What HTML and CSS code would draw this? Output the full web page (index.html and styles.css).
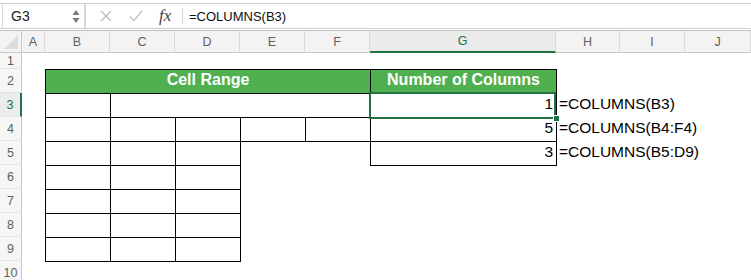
FILE: index.html
```html
<!DOCTYPE html>
<html lang="en">
  <head>
    <meta charset="UTF-8" />
    <title>COLUMNS function</title>
    <link rel="stylesheet" href="styles.css">
  </head>
  <body>
    <header class="formula-bar">
      <div class="name-box">
        <span class="cell-ref">G3</span>
        <svg class="spin" width="8" height="16" viewBox="0 0 8 16">
          <path d="M4 2 L7.5 7 H0.5 Z M4 15 L7.5 10 H0.5 Z" fill="#7a7a7a" />
        </svg>
      </div>
      <div class="formula-tools">
        <svg width="12" height="12" viewBox="0 0 12 12">
          <path d="M1 1 L11 11 M11 1 L1 11" stroke="#c4c4c4" stroke-width="1.6" fill="none" />
        </svg>
        <svg width="14" height="12" viewBox="0 0 14 12">
          <path d="M1 6.5 L5 10.5 L13 1" stroke="#c4c4c4" stroke-width="1.5" fill="none" />
        </svg>
        <span class="fx">fx</span>
      </div>
      <div class="formula-input">=COLUMNS(B3)</div>
    </header>

    <div class="sheet">
      <div class="corner"></div>
      <div class="col-head">A</div>
      <div class="col-head">B</div>
      <div class="col-head">C</div>
      <div class="col-head">D</div>
      <div class="col-head">E</div>
      <div class="col-head">F</div>
      <div class="col-head active">G</div>
      <div class="col-head">H</div>
      <div class="col-head">I</div>
      <div class="col-head">J</div>

      <div class="row-head row-1">1</div>
      <div class="row-head row-2">2</div>
      <div class="row-head row-3 active">3</div>
      <div class="row-head row-4">4</div>
      <div class="row-head row-5">5</div>
      <div class="row-head row-6">6</div>
      <div class="row-head row-7">7</div>
      <div class="row-head row-8">8</div>
      <div class="row-head row-9">9</div>
      <div class="row-head row-10">10</div>

      <!-- row 2: headers -->
      <div class="cell title span-bf row-2">Cell Range</div>
      <div class="cell title col-g row-2">Number of Columns</div>

      <!-- row 3 -->
      <div class="cell col-b row-3"></div>
      <div class="cell span-cf row-3"></div>
      <div class="cell num col-g row-3 selected">1</div>
      <div class="note col-h row-3">=COLUMNS(B3)</div>

      <!-- row 4 -->
      <div class="cell col-b row-4"></div>
      <div class="cell col-c row-4"></div>
      <div class="cell col-d row-4"></div>
      <div class="cell col-e row-4"></div>
      <div class="cell col-f row-4"></div>
      <div class="cell num col-g row-4">5</div>
      <div class="note col-h row-4">=COLUMNS(B4:F4)</div>

      <!-- row 5 -->
      <div class="cell col-b row-5"></div>
      <div class="cell col-c row-5"></div>
      <div class="cell col-d row-5"></div>
      <div class="cell num col-g row-5">3</div>
      <div class="note col-h row-5">=COLUMNS(B5:D9)</div>

      <!-- rows 6-9 -->
      <div class="cell col-b row-6"></div>
      <div class="cell col-c row-6"></div>
      <div class="cell col-d row-6"></div>
      <div class="cell col-b row-7"></div>
      <div class="cell col-c row-7"></div>
      <div class="cell col-d row-7"></div>
      <div class="cell col-b row-8"></div>
      <div class="cell col-c row-8"></div>
      <div class="cell col-d row-8"></div>
      <div class="cell col-b row-9"></div>
      <div class="cell col-c row-9"></div>
      <div class="cell col-d row-9"></div>
    </div>
  </body>
</html>
```

FILE: styles.css
```css
:root {
  --grid-line: #d9d9d9;
  --head-bg: #f3f3f3;
  --head-text: #5f5f5f;
  --select: #217346;
  --title-green: #50b050;
}

body {
  margin: 0;
  background: #fff;
  font-family: 'Liberation Sans', Arial, sans-serif;
  overflow: hidden;
}

/* formula bar */

.formula-bar {
  display: flex;
  height: 24px;
  margin-top: 3px;
  border-top: 1px solid #cfcfcf;
  border-bottom: 1px solid #cfcfcf;
}

.name-box {
  box-sizing: border-box;
  width: 84px;
  margin-left: 2px;
  border-left: 1px solid #dadada;
  border-right: 2px solid #d6d6d6;
  display: flex;
  align-items: center;
  justify-content: space-between;
  padding: 0 4px 0 8px;
}

.cell-ref {
  font-size: 14px;
  color: #222;
}

.formula-tools {
  width: 96px;
  display: flex;
  align-items: center;
}

.formula-tools svg:first-child {
  margin-left: 14px;
}

.formula-tools svg:nth-child(2) {
  margin-left: 17px;
}

.fx {
  margin-left: 16px;
  font-family: 'Liberation Serif', serif;
  font-style: italic;
  font-size: 17px;
  color: #444;
}

.formula-input {
  flex: 1;
  display: flex;
  align-items: center;
  padding-left: 6px;
  border-left: 1px solid #d6d6d6;
  margin: 4px 0;
  font-size: 13px;
  color: #111;
}

/* sheet */

.sheet {
  margin-top: 1px;
  border-top: 1px solid #c2c2c2;
  display: grid;
  grid-template-columns: 22px 23px repeat(5, 65px) 186px 64px 65px 66px;
  grid-template-rows: 22px 16px repeat(9, 24px);
  font-size: 15.5px;
}

.corner {
  background: var(--head-bg);
  border-right: 1px solid #c9c9c9;
  border-bottom: 1px solid #c9c9c9;
  position: relative;
}

.corner::after {
  content: "";
  position: absolute;
  right: 3px;
  bottom: 3px;
  border-left: 14px solid transparent;
  border-bottom: 14px solid #dcdcdc;
}

.col-head {
  background: var(--head-bg);
  border-right: 1px solid var(--grid-line);
  border-bottom: 1px solid #c9c9c9;
  display: flex;
  align-items: center;
  justify-content: center;
  font-size: 12.5px;
  color: var(--head-text);
}

.col-head.active {
  background: #ebebeb;
  color: var(--select);
  border-bottom: 2px solid var(--select);
}

.row-head {
  grid-column: 1;
  background: #f6f6f6;
  border-right: 1px solid #c9c9c9;
  border-bottom: 1px solid #e4e4e4;
  display: flex;
  align-items: flex-end;
  justify-content: center;
  padding-bottom: 4px;
  font-size: 12.5px;
  color: var(--head-text);
}

.row-head.row-1 {
  align-items: center;
  padding-bottom: 0;
}

.row-head.active {
  background: #ececec;
  color: var(--select);
  border-right: 2px solid var(--select);
}

.row-1 { grid-row: 2; }
.row-2 { grid-row: 3; }
.row-3 { grid-row: 4; }
.row-4 { grid-row: 5; }
.row-5 { grid-row: 6; }
.row-6 { grid-row: 7; }
.row-7 { grid-row: 8; }
.row-8 { grid-row: 9; }
.row-9 { grid-row: 10; }
.row-10 { grid-row: 11; }

.col-b { grid-column: 3; }
.col-c { grid-column: 4; }
.col-d { grid-column: 5; }
.col-e { grid-column: 6; }
.col-f { grid-column: 7; }
.col-g { grid-column: 8; }
.col-h { grid-column: 9 / 12; }
.span-bf { grid-column: 3 / 8; }
.span-cf { grid-column: 4 / 8; }

.cell {
  border: 1px solid #000;
  margin: 0 -1px -1px 0;
  display: flex;
  align-items: flex-end;
  padding-bottom: 4px;
  box-sizing: border-box;
  color: #000;
}

.cell.title {
  background: var(--title-green);
  color: #fff;
  font-weight: bold;
  justify-content: center;
  font-size: 16px;
}

.cell.num {
  justify-content: flex-end;
  padding-right: 3px;
}

.cell.selected {
  position: relative;
}

.cell.selected::after {
  content: "";
  position: absolute;
  left: -2px;
  top: -2px;
  right: 0;
  bottom: -2px;
  border: 2px solid var(--select);
}

.cell.selected::before {
  content: "";
  position: absolute;
  right: -3px;
  bottom: -4px;
  width: 5px;
  height: 5px;
  background: var(--select);
  outline: 1px solid #fff;
  z-index: 1;
}

.note {
  display: flex;
  align-items: flex-end;
  padding: 0 0 4px 3px;
  white-space: nowrap;
  color: #000;
}
```
